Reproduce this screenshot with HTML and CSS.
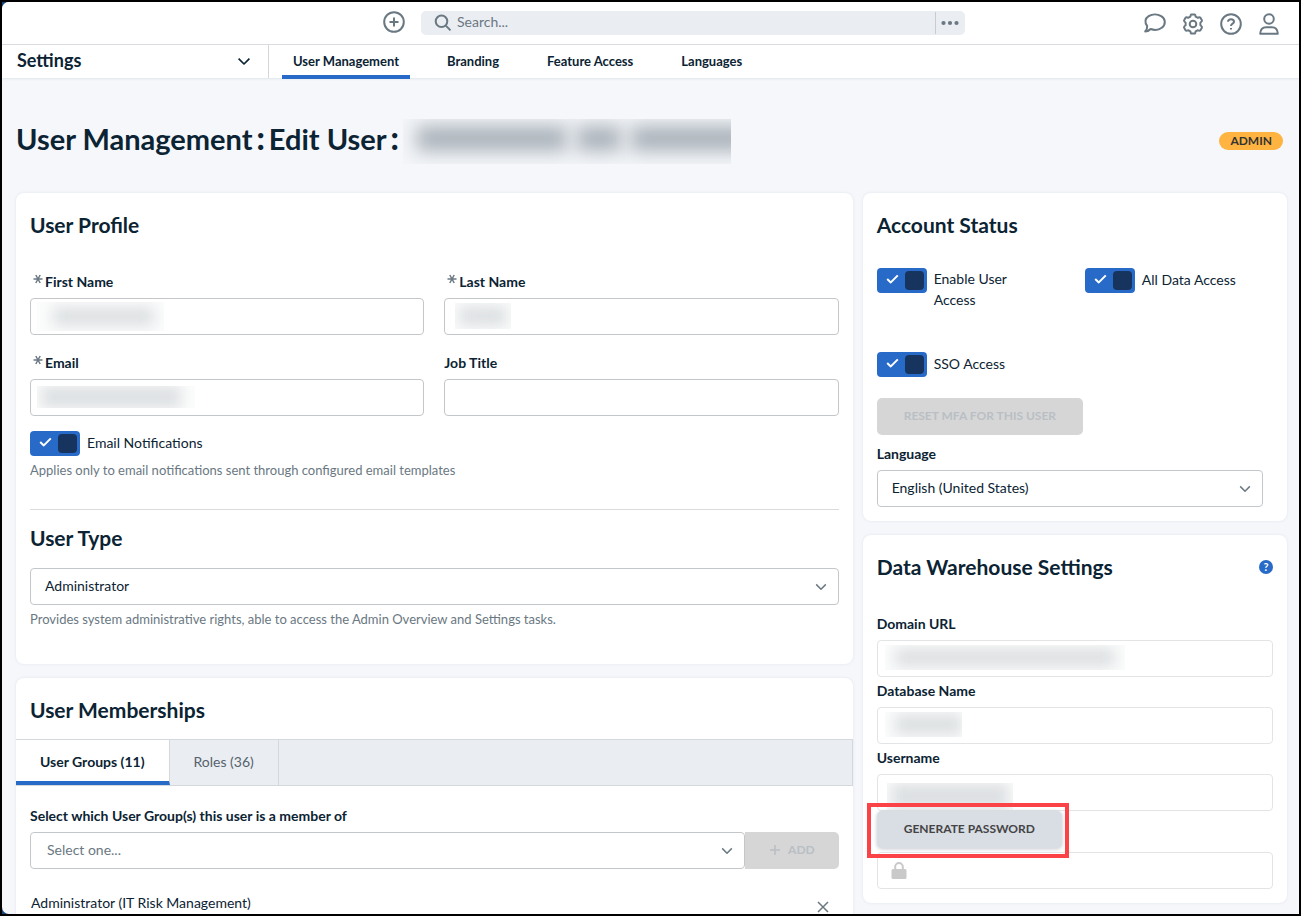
FILE: index.html
```
<!DOCTYPE html>
<html lang="en">
<head>
    <meta charset="UTF-8">
    <meta name="viewport" content="width=device-width, initial-scale=1.0">
    <title>User Management: Edit User</title>
    <link rel="stylesheet" href="styles.css">
</head>
<body>
    <svg class="symbols" aria-hidden="true">
        <symbol id="chevron" viewBox="0 0 12 8"><path d="M1.2 1.4 L6 6.2 L10.8 1.4"/></symbol>
        <symbol id="check" viewBox="0 0 13 10"><path d="M1.2 5 L4.8 8.4 L11.8 1.4"/></symbol>
        <symbol id="star" viewBox="0 0 10 10"><path d="M.5 5 H9.5 M2.8 1 L7.2 9 M7.2 1 L2.8 9"/></symbol>
    </svg>
    <div class="app">
        <header class="topbar">
            <div class="logo"></div>
            <button type="button" class="icon-btn create" aria-label="Create">
                <svg width="22" height="22" viewBox="0 0 22 22"><circle cx="11" cy="11" r="9.8"/><path d="M11 6.5 V15.5 M6.5 11 H15.5"/></svg>
            </button>
            <div class="search">
                <svg width="18" height="18" viewBox="0 0 18 18"><circle cx="7.5" cy="7.3" r="5.8"/><path d="M11.8 11.6 L16.5 16.4"/></svg>
                <input type="text" placeholder="Search..." aria-label="Search">
                <button type="button" class="more" aria-label="More search options">
                    <svg width="18" height="6" viewBox="0 0 18 6"><circle cx="2.5" cy="3" r="2.1"/><circle cx="9" cy="3" r="2.1"/><circle cx="15.5" cy="3" r="2.1"/></svg>
                </button>
            </div>
            <div class="tools">
                <button type="button" class="icon-btn" aria-label="Messages">
                    <svg width="22" height="22" viewBox="0 0 22 22"><path d="M3.2 13.2 C.4 9.5 1 5.5 4.6 3.2 C8.3 1 13.6 1 17.2 3.1 C21.8 5.8 22 11.7 17.8 14.8 C14.7 17 10.3 17.3 6.6 16 C5.3 17.5 3.3 18.5 1.2 18.5 C2.7 16.8 3.3 15 3.2 13.2 Z"/></svg>
                </button>
                <button type="button" class="icon-btn" aria-label="Settings">
                    <svg width="22" height="22" viewBox="0 0 22 22"><circle cx="11" cy="11" r="3.3"/><path d="M9.4 1.4 H12.6 Q13.4 1.4 13.6 3.6 Q14.6 4 15.6 4.8 Q17.8 4 18.3 4.6 L20 7.4 Q20.3 8.2 18.4 9.7 V12.3 Q20.3 13.8 20 14.6 L18.3 17.4 Q17.8 18 15.6 17.2 Q14.6 18 13.6 18.4 Q13.4 20.6 12.6 20.6 H9.4 Q8.6 20.6 8.4 18.4 Q7.4 18 6.4 17.2 Q4.2 18 3.7 17.4 L2 14.6 Q1.7 13.8 3.6 12.3 V9.7 Q1.7 8.2 2 7.4 L3.7 4.6 Q4.2 4 6.4 4.8 Q7.4 4 8.4 3.6 Q8.6 1.4 9.4 1.4 Z"/></svg>
                </button>
                <button type="button" class="icon-btn" aria-label="Help">
                    <svg width="22" height="22" viewBox="0 0 22 22"><circle cx="11" cy="11" r="9.8"/><path d="M8 8.8 C8 5.4 14 5.5 14 8.8 C14 10.8 11 10.6 11 12.9"/><path d="M11 15 V16.6"/></svg>
                </button>
                <button type="button" class="icon-btn" aria-label="Account">
                    <svg width="22" height="22" viewBox="0 0 22 22"><circle cx="11" cy="6" r="4.8"/><path d="M2.2 20.8 C2.2 16.3 5 14.2 8 14.2 H14 C17 14.2 19.8 16.3 19.8 20.8 Z"/></svg>
                </button>
            </div>
        </header>

        <div class="subnav">
            <button type="button" class="section-picker">
                Settings
                <svg width="14" height="9"><use href="#chevron"/></svg>
            </button>
            <nav class="nav-tabs">
                <a href="#" class="active">User Management</a>
                <a href="#">Branding</a>
                <a href="#">Feature Access</a>
                <a href="#">Languages</a>
            </nav>
        </div>

        <main>
            <div class="page-head">
                <h1>User Management<b>:</b>Edit User<b>:</b></h1>
                <span class="redacted redacted-title"><i></i><i></i><i></i></span>
                <span class="badge">ADMIN</span>
            </div>

            <div class="columns">
                <div class="column">
                    <section class="card profile">
                        <h2>User Profile</h2>
                        <div class="form-grid">
                            <div class="field">
                                <label for="first-name"><svg class="required"><use href="#star"/></svg>First Name</label>
                                <div class="control"><input type="text" id="first-name"><span class="redacted redacted-first"></span></div>
                            </div>
                            <div class="field">
                                <label for="last-name"><svg class="required"><use href="#star"/></svg>Last Name</label>
                                <div class="control"><input type="text" id="last-name"><span class="redacted redacted-last"></span></div>
                            </div>
                            <div class="field">
                                <label for="email"><svg class="required"><use href="#star"/></svg>Email</label>
                                <div class="control"><input type="text" id="email"><span class="redacted redacted-email"></span></div>
                            </div>
                            <div class="field">
                                <label for="job-title">Job Title</label>
                                <div class="control"><input type="text" id="job-title"></div>
                            </div>
                        </div>
                        <label class="toggle">
                            <span class="switch"><input type="checkbox" checked><svg><use href="#check"/></svg></span>
                            <span class="toggle-text">Email Notifications</span>
                        </label>
                        <p class="hint">Applies only to email notifications sent through configured email templates</p>
                        <hr>
                        <h2 id="user-type-title">User Type</h2>
                        <div class="control">
                            <select aria-labelledby="user-type-title"><option>Administrator</option></select>
                            <svg class="caret"><use href="#chevron"/></svg>
                        </div>
                        <p class="hint">Provides system administrative rights, able to access the Admin Overview and Settings tasks.</p>
                    </section>

                    <section class="card memberships">
                        <h2>User Memberships</h2>
                        <div class="tabs" role="tablist">
                            <button type="button" role="tab" aria-selected="true" class="active">User Groups (11)</button>
                            <button type="button" role="tab" aria-selected="false">Roles (36)</button>
                        </div>
                        <div class="field">
                            <label for="group">Select which User Group(s) this user is a member of</label>
                            <div class="add-row">
                                <div class="control">
                                    <select id="group" class="placeholder"><option>Select one...</option></select>
                                    <svg class="caret"><use href="#chevron"/></svg>
                                </div>
                                <button type="button" class="btn" disabled>
                                    <svg width="12" height="12" viewBox="0 0 12 12"><path d="M6 1 V11 M1 6 H11"/></svg>ADD
                                </button>
                            </div>
                        </div>
                        <ul class="members">
                            <li>
                                Administrator (IT Risk Management)
                                <button type="button" class="icon-btn" aria-label="Remove">
                                    <svg width="12" height="12" viewBox="0 0 12 12"><path d="M1 1 L11 11 M11 1 L1 11"/></svg>
                                </button>
                            </li>
                        </ul>
                    </section>
                </div>

                <div class="column">
                    <section class="card status">
                        <h2>Account Status</h2>
                        <div class="toggles">
                            <label class="toggle">
                                <span class="switch"><input type="checkbox" checked><svg><use href="#check"/></svg></span>
                                <span class="toggle-text">Enable User Access</span>
                            </label>
                            <label class="toggle">
                                <span class="switch"><input type="checkbox" checked><svg><use href="#check"/></svg></span>
                                <span class="toggle-text">All Data Access</span>
                            </label>
                            <label class="toggle">
                                <span class="switch"><input type="checkbox" checked><svg><use href="#check"/></svg></span>
                                <span class="toggle-text">SSO Access</span>
                            </label>
                        </div>
                        <button type="button" class="btn" disabled>RESET MFA FOR THIS USER</button>
                        <div class="field language">
                            <label for="language">Language</label>
                            <div class="control">
                                <select id="language"><option>English (United States)</option></select>
                                <svg class="caret"><use href="#chevron"/></svg>
                            </div>
                        </div>
                    </section>

                    <section class="card warehouse">
                        <div class="card-head">
                            <h2>Data Warehouse Settings</h2>
                            <button type="button" class="info" aria-label="Help">?</button>
                        </div>
                        <div class="field">
                            <label for="domain">Domain URL</label>
                            <div class="control"><input type="text" id="domain" readonly><span class="redacted redacted-domain"></span></div>
                        </div>
                        <div class="field">
                            <label for="database">Database Name</label>
                            <div class="control"><input type="text" id="database" readonly><span class="redacted redacted-database"></span></div>
                        </div>
                        <div class="field">
                            <label for="username">Username</label>
                            <div class="control"><input type="text" id="username" readonly><span class="redacted redacted-username"></span></div>
                        </div>
                        <div class="generate">
                            <button type="button" class="btn">GENERATE PASSWORD</button>
                        </div>
                        <div class="control">
                            <input type="text" aria-label="Password" readonly>
                            <svg class="lock" viewBox="0 0 16 17"><path d="M4.2 8 V4.8 a3.8 3.8 0 0 1 7.6 0 V8"/><rect x="0.5" y="7" width="15" height="10" rx="1.5"/></svg>
                        </div>
                    </section>
                </div>
            </div>
        </main>
    </div>
</body>
</html>
```
FILE: styles.css
```
* {
    box-sizing: border-box;
}
body {
    margin: 0;
    height: 100vh;
    border: 2px solid #000;
    background-color: #17477a;
    color: #0b2333;
    font-family: Lato, "Open Sans", sans-serif;
    font-size: 14px;
    line-height: 20px;
    overflow: hidden;
}
button, input, select {
    font: inherit;
    color: inherit;
}
button {
    padding: 0;
    border: none;
    background: none;
    cursor: pointer;
}
svg {
    display: block;
    flex: none;
    fill: none;
    stroke: currentColor;
    stroke-width: 2;
    stroke-linejoin: round;
}
h1, h2, p, ul {
    margin: 0;
    padding: 0;
}
h2 {
    font-size: 21px;
    line-height: 28px;
    font-weight: 700;
}
.symbols {
    display: none;
}
.app {
    height: 100%;
    border-radius: 7px 0 0 7px;
    background-color: #f5f7fb;
    overflow: hidden;
}

/* top bar */
.topbar {
    display: flex;
    align-items: center;
    height: 43px;
    padding-right: 19px;
    background-color: #fff;
    border-bottom: 1px solid #d9dbdd;
}
.logo {
    flex: 0 1 381px;
}
.icon-btn {
    color: #6a7882;
}
.create {
    margin: 0 16px 3px 0;
}
.search {
    display: flex;
    align-items: center;
    flex: 0 1 544px;
    height: 24px;
    padding-left: 13px;
    border-radius: 5px;
    background-color: #eaedf2;
    color: #6a7882;
}
.search input {
    flex: 1;
    min-width: 0;
    padding: 0 5px 2px;
    border: none;
    outline: none;
    background: none;
}
.search input::placeholder {
    color: #6a7882;
    opacity: 1;
}
.more {
    width: 30px;
    height: 22px;
    padding-left: 5px;
    border-left: 1px solid #c9cccf;
}
.more svg {
    fill: currentColor;
    stroke: none;
}
.tools {
    display: flex;
    gap: 16px;
    margin-left: auto;
    padding-top: 2px;
}

/* section navigation */
.subnav {
    display: flex;
    height: 33px;
    background-color: #fff;
    box-shadow: 0 1px 2px #dfe5ea;
}
.section-picker {
    display: flex;
    align-items: center;
    justify-content: space-between;
    width: 267px;
    padding: 0 17px 4px 15px;
    border-right: 1px solid #d4d7da;
    font-size: 18px;
    font-weight: 700;
}
.section-picker svg {
    margin-top: 4px;
    stroke-width: 1.5;
}
.nav-tabs {
    display: flex;
    gap: 26px;
    padding-left: 13px;
}
.nav-tabs a {
    height: 34px;
    padding: 0 11px;
    color: inherit;
    font-size: 13px;
    font-weight: 700;
    line-height: 32px;
    text-decoration: none;
}
.nav-tabs .active {
    border-bottom: 4px solid #276ac8;
}

main {
    padding: 0 12px 0 14px;
}
.page-head {
    display: flex;
    align-items: center;
    height: 115px;
    padding: 11px 4px 0 0;
}
h1 {
    padding-bottom: 4px;
    font-size: 29px;
    line-height: 40px;
    font-weight: 700;
}
h1 b {
    margin: 0 4px;
    font-size: 32px;
    line-height: 36px;
}
.badge {
    margin-left: auto;
    padding: 0 11px;
    border-radius: 9px;
    background-color: #ffb340;
    color: #333;
    font-size: 12px;
    font-weight: 700;
    line-height: 18px;
}
.columns {
    display: grid;
    grid-template-columns: minmax(0, 838fr) minmax(0, 425fr);
    gap: 10px;
}
.column {
    display: flex;
    flex-direction: column;
    gap: 14px;
}
.card {
    padding: 18px 14px 14px;
    border-radius: 8px;
    background-color: #fff;
    box-shadow: 0 0 3px #dfe3ea;
}

/* form controls */
.field label {
    display: flex;
    margin-bottom: 6px;
    font-weight: 700;
}
.required {
    width: 10px;
    height: 10px;
    margin: 2px 2px 0 3px;
    color: #6a7882;
    stroke-width: 1.5;
}
.control {
    position: relative;
    flex: 1;
}
.control input, .control select {
    display: block;
    width: 100%;
    height: 37px;
    padding: 0 14px 2px;
    border: 1px solid #c4c7c9;
    border-radius: 4px;
    background-color: #fff;
    appearance: none;
}
.control input:read-only {
    border-color: #e2e4e6;
}
.control .placeholder {
    padding-left: 16px;
    color: #6a7882;
}
.caret {
    position: absolute;
    top: 15px;
    right: 12px;
    width: 12px;
    height: 8px;
    color: #6a7882;
    stroke-width: 1.5;
    pointer-events: none;
}
.toggle {
    display: flex;
    gap: 7px;
}
.toggle-text {
    line-height: 21px;
    padding: 1px 0;
}
.switch {
    position: relative;
    flex: none;
    height: 25px;
}
.switch input {
    display: block;
    width: 50px;
    height: 25px;
    margin: 0;
    padding: 3px;
    border-radius: 4px;
    background-color: #276ac8;
    appearance: none;
}
.switch input::before {
    content: "";
    display: block;
    width: 19px;
    height: 19px;
    border-radius: 4px;
    background-color: #17345f;
}
.switch input:checked::before {
    margin-left: auto;
}
.switch svg {
    position: absolute;
    top: 6px;
    left: 9px;
    width: 13px;
    height: 10px;
    color: #fff;
    pointer-events: none;
}
.hint {
    margin-top: 4px;
    color: #6a7882;
    font-size: 13px;
}
.btn {
    height: 37px;
    padding: 0 27px 2px;
    border-radius: 5px;
    background-color: #d9dde4;
    box-shadow: 0 1px 4px #c4c8ce;
    color: #444;
    font-size: 12px;
    font-weight: 700;
}
.btn:disabled {
    background-color: #d6d6d6;
    box-shadow: none;
    color: #b9bfc4;
}

/* left column */
.profile {
    padding-bottom: 35px;
}
.form-grid {
    display: grid;
    grid-template-columns: 1fr 1fr;
    gap: 18px 20px;
    margin: 33px 0 15px;
}
hr {
    margin: 29px 0 14px;
    border: none;
    border-top: 1px solid #d9dbdd;
}
#user-type-title {
    margin-bottom: 16px;
}
.memberships {
    padding: 18px 0 14px;
}
.memberships h2, .memberships .field, .members {
    padding: 0 14px;
}
.tabs {
    display: flex;
    height: 47px;
    margin: 15px 0 20px;
    border: 1px solid #d4d8dc;
    border-left: none;
    background-color: #eaedf2;
}
.tabs button {
    padding: 0 24px 2px;
    border-right: 1px solid #d4d8dc;
    color: #55626c;
}
.tabs .active {
    padding-top: 4px;
    border-bottom: 4px solid #276ac8;
    background-color: #fff;
    color: #0b2333;
    font-weight: 700;
}
.add-row {
    display: flex;
}
.add-row .btn {
    display: flex;
    align-items: center;
    gap: 7px;
    padding: 0 24px 2px;
    border-radius: 0 5px 5px 0;
}
.add-row .btn svg {
    stroke-width: 1.5;
}
.members {
    margin-top: 24px;
    list-style: none;
}
.members li {
    display: flex;
    justify-content: space-between;
    padding: 0 10px 0 1px;
}
.members svg {
    margin-top: 8px;
    stroke-width: 1.5;
}

/* right column */
.toggles {
    display: grid;
    grid-template-columns: 1fr 1fr;
    gap: 42px 20px;
    margin: 29px 0 21px;
}
.toggles .toggle-text {
    padding-right: 20px;
}
.toggles .toggle:first-child .toggle-text {
    padding: 0 50px 0 0;
}
.language {
    margin: 9px 10px 0 0;
}
.card-head {
    display: flex;
    align-items: center;
    justify-content: space-between;
    margin-bottom: 33px;
}
.info {
    width: 14px;
    height: 14px;
    border-radius: 50%;
    background-color: #276ac8;
    color: #fff;
    font-size: 11px;
    font-weight: 700;
    line-height: 14px;
}
.warehouse .field + .field {
    margin-top: 4px;
}
.generate {
    position: relative;
    width: max-content;
    margin-bottom: 4px;
}
.generate .btn {
    display: block;
}
.generate::after {
    content: "";
    position: absolute;
    inset: -8px -7px -10px -10px;
    z-index: 1;
    border: 4px solid #fb4347;
    pointer-events: none;
}
.lock {
    position: absolute;
    top: 10px;
    left: 14px;
    width: 16px;
    height: 17px;
    color: #c9c9c9;
}
.lock rect {
    fill: currentColor;
    stroke: none;
}

/* hidden personal data */
.redacted {
    overflow: hidden;
    pointer-events: none;
}
.control .redacted {
    position: absolute;
    background-color: #fbfcfc;
}
.control .redacted::before {
    content: "";
    display: block;
    height: 100%;
    background-color: #dde0e2;
    filter: blur(7px);
}
.redacted-first {
    top: 4px;
    left: 7px;
    width: 127px;
    height: 29px;
    padding: 5px 10px 5px 16px;
}
.redacted-last {
    top: 5px;
    left: 11px;
    width: 56px;
    height: 26px;
    padding: 3px 4px;
}
.redacted-email {
    top: 7px;
    left: 7px;
    width: 158px;
    height: 22px;
    padding: 0 14px 0 4px;
}
.redacted-domain {
    top: 5px;
    left: 8px;
    width: 240px;
    height: 25px;
    padding: 3px 10px;
}
.redacted-database {
    top: 5px;
    left: 8px;
    width: 77px;
    height: 25px;
    padding: 2px 0 2px 10px;
}
.redacted-username {
    top: 9px;
    left: 10px;
    width: 126px;
    height: 27px;
    padding: 0 4px;
}
.redacted-title {
    display: flex;
    gap: 10px;
    width: 328px;
    height: 45px;
    padding: 7px 0 13px 14px;
    background-color: #f3f5f8;
}
.redacted-title i {
    flex: 0 0 150px;
    background-color: #aab2ba;
    filter: blur(9px);
}
.redacted-title i:nth-child(2) {
    flex-basis: 44px;
}
```
